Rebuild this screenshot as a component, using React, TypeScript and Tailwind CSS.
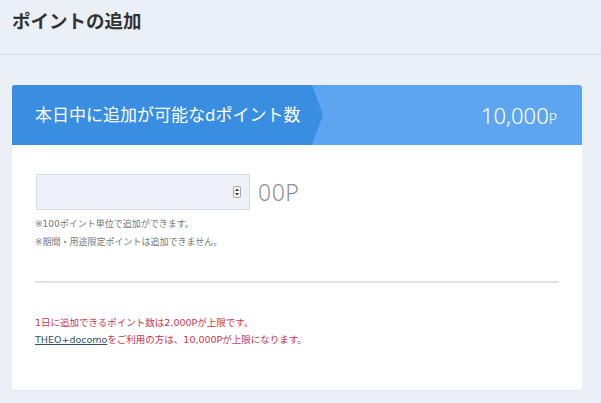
const JP = "font-['Noto_Sans','Noto_Sans_CJK_JP',sans-serif]";
const SMALL = "font-['DejaVu_Sans','Noto_Sans_CJK_JP',sans-serif]";

export default function App() {
  return (
    <div className={`min-h-[403px] w-[601px] bg-[#ebeff6] ${JP}`}>
      {/* Header */}
      <header className="h-[55px] border-b border-[#d5dbe4] px-3 pt-[7px]">
        <h1 className="text-[18.5px] font-bold leading-[28px] text-[#333]">ポイントの追加</h1>
      </header>

      {/* Card */}
      <div className="ml-3 mt-[30px] w-[570px] overflow-hidden rounded-[3px] bg-white shadow-[0_1px_1px_rgba(0,0,0,0.05)]">
        <div className="flex h-[60px] items-center bg-[#5da6ef]">
          <div className="flex h-full w-[311px] items-center bg-[#3a8ee2] pl-[23px] [clip-path:polygon(0_0,300px_0,311px_50%,300px_100%,0_100%)]">
            <span className="text-[17px] text-white">本日中に追加が可能なdポイント数</span>
          </div>
          <div className="flex flex-1 items-baseline justify-end pr-[25px] text-white">
            <span className="text-[22px] font-light">10,000</span>
            <span className="text-[14px] font-light">P</span>
          </div>
        </div>

        <div className="px-[23px] pb-[42px] pt-[29px]">
          <div className="flex items-center">
            <div className="ml-px flex h-[36px] w-[214px] items-center justify-end border border-[#d6dce5] bg-[#eef2f8] pr-[8px]">
              <svg width="8" height="12" viewBox="0 0 8 12" className="block">
                <rect x="0.5" y="0.5" width="7" height="11" rx="1" fill="#f4f4f4" stroke="#a3a8ae" />
                <path d="M2 5 L4 2.5 L6 5 Z" fill="#333" />
                <path d="M2 7 L4 9.5 L6 7 Z" fill="#333" />
              </svg>
            </div>
            <span className="ml-[8px] text-[23px] font-light tracking-[0.5px] text-[#8b929b]">00P</span>
          </div>
          <div className={`mt-[5px] text-[9px] leading-[18px] text-[#777] ${SMALL}`}>
            <p>※100ポイント単位で追加ができます。</p>
            <p>※期間・用途限定ポイントは追加できません。</p>
          </div>

          <div className="mt-[30px] h-[2px] bg-[#dfe2e7]" />

          <div className={`mt-[31px] text-[9.5px] leading-[17px] text-[#c9364c] ${SMALL}`}>
            <p>1日に追加できるポイント数は2,000Pが上限です。</p>
            <p>
              <a href="#" className="text-[#2f4f6c] underline">THEO+docomo</a>
              をご利用の方は、10,000Pが上限になります。
            </p>
          </div>
        </div>
      </div>
    </div>
  );
}
